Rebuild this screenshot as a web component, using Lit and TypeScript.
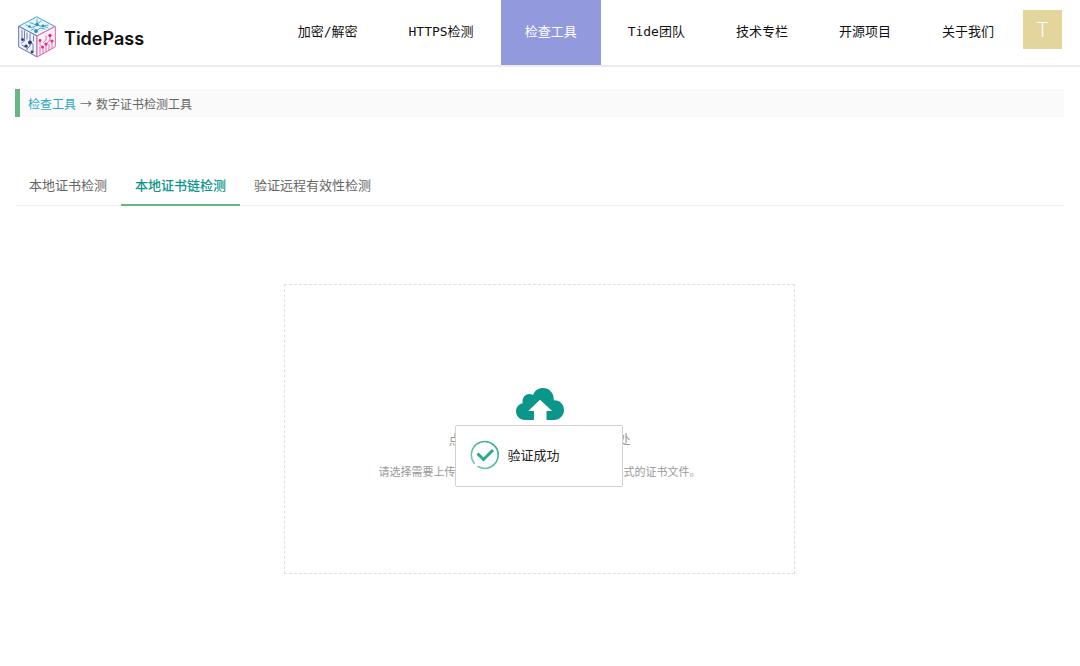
import { LitElement, html, css, svg } from "lit";
import { customElement, state } from "lit/decorators.js";
import { classMap } from "lit/directives/class-map.js";

const NAV = ["加密/解密", "HTTPS检测", "检查工具", "Tide团队", "技术专栏", "开源项目", "关于我们"];
const TABS = ["本地证书检测", "本地证书链检测", "验证远程有效性检测"];

const cubeLogo = svg`
  <svg class="cube" viewBox="0 0 38 42" aria-hidden="true" fill="none" stroke-linecap="round" stroke-linejoin="round">
    <g stroke="#3fa3c4" stroke-width="1">
      <path fill="#e6f4f9" d="M19 1L37 10.500L19 20L1 10.500Z"/>
      <path stroke-width=".9" d="M8 9l5 2.500 4-1M12 6.500l6 2.500M19 3.500v4M23 5l-4 3M30 9l-6 1.500-5-1.500M27 13l-5-1-3 3M13 14.500l3-2M30 12l-3-1.500"/>
      <g fill="#2b8fb8" stroke="none"><circle cx="19" cy="8.500" r="1.700"/><circle cx="18" cy="15" r="1.900"/><circle cx="25" cy="10" r="1.400"/><circle cx="11.500" cy="10.500" r="1.300"/></g>
    </g>
    <g stroke="#6674ac" stroke-width="1">
      <path fill="#f1f2fa" d="M1 10.500L19 20V41L1 31Z"/>
      <path stroke-width=".9" d="M4 14v8M6.500 15v10l-3 2M9 17v6M12 18v7l3 3v8M15.500 20v5M9 30v4M12 27v3l-3 3M4 29l3 2"/>
      <g fill="#2b3c86" stroke="none"><circle cx="4.500" cy="23.500" r="1.500"/><circle cx="12" cy="26.500" r="2"/><circle cx="8" cy="30" r="1.600"/><circle cx="14" cy="36" r="1.400"/></g>
    </g>
    <g stroke="#dc64a8" stroke-width="1">
      <path fill="#fceef6" d="M37 10.500L19 20V41L37 31Z"/>
      <path stroke-width=".9" d="M22 39v-8M25 37.500v-6l-3-3v-3M28 36v-8l4-4v-4M31 34.500v-6M34 32.500v-6l-2-2M28 24v-4M25 27l3-3"/>
      <g fill="#d8307f" stroke="none"><circle cx="32" cy="19.500" r="1.700"/><circle cx="28" cy="28" r="1.600"/><circle cx="24.500" cy="31" r="1.500"/><circle cx="34" cy="25" r="1.500"/><circle cx="22" cy="24.500" r="1.400"/></g>
    </g>
  </svg>`;

const cloudIcon = svg`
  <svg class="cloud" viewBox="0 0 48 32" aria-hidden="true">
    <path fill="#0a9688" d="M9 32C4 32 0 28.200 0 23.300C0 19 3 15.800 6.800 15.200C5.600 10.500 8.700 6.200 13.200 6C14.600 6 15.800 6.200 17 6.900C18.700 2.700 22.500 0 27 0C33 0 37.700 4.800 37.700 10.800V12.300C43.600 12 48 16.300 48 22C48 27.600 43.600 32 38 32H30.500V23H36.200L24 11.700L12.200 23H18V32Z"/>
  </svg>`;

const checkIcon = svg`
  <svg class="check" viewBox="0 0 30 30" aria-hidden="true" fill="none" stroke-linecap="round">
    <defs>
      <linearGradient id="ring" x1="1" y1="0" x2="0" y2="1">
        <stop offset="0" stop-color="#27ab8a"/>
        <stop offset="1" stop-color="#7cccb7"/>
      </linearGradient>
    </defs>
    <path stroke="url(#ring)" stroke-width="1.600" d="M4.300 23.300A13.400 13.400 0 1 1 8 26.500"/>
    <path stroke="#27ab8a" stroke-width="3" stroke-linecap="butt" d="M7.500 13.500L13.500 19.500L23 10"/>
  </svg>`;

@customElement("app-root")
export class AppRoot extends LitElement {
  @state() private tab = 1;

  static styles = css`
    :host {
      display: block;
      min-height: 100vh;
      background: #fff;
      color: #666;
      font-family: "Noto Sans CJK SC", sans-serif;
      font-size: 13px;
      line-height: 20px;
    }
    .header {
      display: flex;
      align-items: center;
      justify-content: space-between;
      height: 65px;
      padding: 0 18px;
      border-bottom: 2px solid #ececee;
    }
    .brand {
      display: flex;
      align-items: center;
      gap: 8px;
      padding-top: 8px;
      color: #111;
      font: 600 18px/24px Inter, "Noto Sans CJK SC", sans-serif;
      text-decoration: none;
    }
    .name { padding-top: 4px; }
    .cube { width: 38px; height: 42px; }
    .right { display: flex; gap: 5px; height: 100%; }
    .nav { display: flex; gap: 3px; }
    .link {
      display: flex;
      align-items: center;
      padding: 0 24px 1px;
      color: #111;
      font-family: "DejaVu Sans Mono", "Noto Sans CJK SC", monospace;
      text-decoration: none;
      white-space: nowrap;
    }
    .link.on { background: #9299dc; color: #fff; }
    .avatar {
      display: grid;
      place-items: center;
      width: 39px;
      height: 39px;
      margin-top: 10px;
      padding: 0;
      border: 0;
      background: #e3d59c;
      color: #fff;
      font: 300 20px/24px Roboto, sans-serif;
    }
    .main { padding: 22px 16px 0 15px; }
    .crumbs {
      display: flex;
      gap: 4px;
      padding: 5px 8px 3px;
      border-left: 5px solid #67b683;
      background: #fafafa;
      font-size: 12px;
    }
    .crumbs a { color: #2aa9c4; text-decoration: none; }
    .tabs {
      display: flex;
      margin-top: 49px;
      border-bottom: 1px solid #f1f1f1;
    }
    .tab {
      height: 40px;
      margin-bottom: -1px;
      padding: 0 14px;
      border: 0;
      border-bottom: 2px solid transparent;
      background: none;
      color: #666;
      font: inherit;
    }
    .tab.on { border-color: #67b683; color: #0a9688; font-weight: 500; }
    .panel {
      position: relative;
      width: min(100%, 511px);
      margin: 78px auto 0;
    }
    .drop {
      display: flex;
      flex-direction: column;
      align-items: center;
      padding: 103px 16px 92px;
      border: 1px dashed #e0e0e0;
      color: #999;
      text-align: center;
    }
    .file { position: absolute; width: 1px; height: 1px; opacity: 0; }
    .cloud { width: 48px; height: 32px; margin-bottom: 9px; }
    .hint { margin-top: 12px; font-size: 11px; }
    .toast {
      position: absolute;
      top: 141px;
      left: 50%;
      display: flex;
      align-items: center;
      gap: 8px;
      box-sizing: border-box;
      width: 168px;
      height: 62px;
      margin-left: -85px;
      padding: 0 14px 2px;
      border: 1px solid #d0d0d0;
      border-radius: 2px;
      background: #fff;
      color: #222;
    }
    .check { width: 30px; height: 30px; }
  `;

  render() {
    return html`
      <header class="header">
        <a class="brand" href="#">${cubeLogo}<span class="name">TidePass</span></a>
        <div class="right">
          <nav class="nav">
            ${NAV.map((n, i) => html`<a href="#" class=${classMap({ link: true, on: i === 2 })}>${n}</a>`)}
          </nav>
          <button class="avatar">T</button>
        </div>
      </header>
      <main class="main">
        <div class="crumbs"><a href="#">检查工具</a><span>→</span><span>数字证书检测工具</span></div>
        <div class="tabs" role="tablist">
          ${TABS.map(
            (t, i) => html`<button
              role="tab"
              aria-selected=${i === this.tab}
              class=${classMap({ tab: true, on: i === this.tab })}
              @click=${() => (this.tab = i)}
            >${t}</button>`
          )}
        </div>
        <div class="panel">
          <label class="drop">
            <input class="file" type="file" />
            ${cloudIcon}
            <span>点击上传，或将文件拖拽到此处</span>
            <span class="hint">请选择需要上传的证书链文件，目前仅支持 PEM格式的证书文件。</span>
          </label>
          <div class="toast" role="status">${checkIcon}<span>验证成功</span></div>
        </div>
      </main>
    `;
  }
}
